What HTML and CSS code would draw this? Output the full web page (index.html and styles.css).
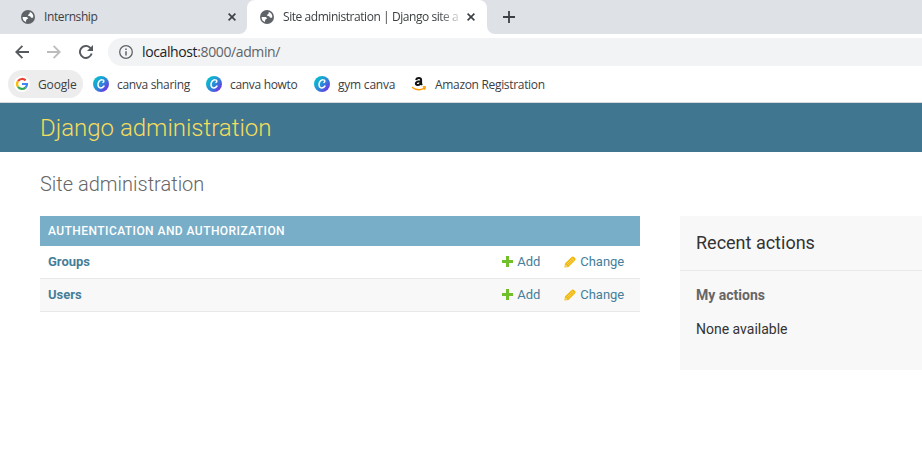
FILE: index.html
```html
<!DOCTYPE html>
<html lang="en">
<head>
<meta charset="utf-8">
<title>Site administration | Django site admin</title>
<link rel="stylesheet" href="styles.css">
</head>
<body>
<svg class="defs" width="0" height="0" aria-hidden="true">
  <defs>
    <linearGradient id="canvaFill" x1="0.1" y1="0.2" x2="0.9" y2="0.9">
      <stop offset="0" stop-color="#08bdd0"/><stop offset=".5" stop-color="#2a8ad8"/><stop offset="1" stop-color="#7628e8"/>
    </linearGradient>
    <symbol id="globe" viewBox="0 0 14 14">
      <circle cx="7" cy="7" r="7" fill="#5f6368"/>
      <path d="M1.6 6.9 4.5 7C6.1 7 7.1 7.5 7 8.7L5.9 9.1C5.4 9.7 5.5 10.2 5 10.5V12A5.4 5.4 0 0 1 1.6 6.9ZM8.9 2A5.4 5.4 0 0 1 12.3 7.3C11.4 8.1 10.3 8 9.8 7.2 9.4 6.2 8.6 6.2 7.6 6 6.9 5.4 7 4.6 8 4.3 8.9 3.9 8.4 2.8 8.9 2Z" fill="#fff"/>
    </symbol>
    <symbol id="canva" viewBox="0 0 16 16">
      <circle cx="8" cy="8" r="8" fill="url(#canvaFill)"/>
      <path d="M10 6.4C11.2 5.9 11.2 3.9 9.3 3.8 6.8 3.6 4.8 6.3 5 9 5.3 12.8 9.1 12.7 11 10" fill="none" stroke="#fff" stroke-width="1.5" stroke-linecap="round"/>
    </symbol>
    <symbol id="close" viewBox="0 0 8 8"><path d="M.6.6 7.4 7.4M7.4.6.6 7.4" stroke="#3c4043" stroke-width="1.6"/></symbol>
    <symbol id="add" viewBox="0 0 11 11"><path d="M4 0h3v4h4v3H7v4H4V7H0V4h4z" fill="#70bf2b"/></symbol>
    <symbol id="pencil" viewBox="0 0 12 12">
      <path d="M.4 11.6 1 7.6 7.6 1Q8.8-.1 9.9 1L11 2.1Q12.1 3.2 11 4.4L4.4 11Z" fill="#efb80b"/>
      <path d="M2.8 8.2 7.5 3.5M4 9.3 8.7 4.6" stroke="#f8dc82" stroke-width=".7"/>
      <path d="M1.6 8.7 3.3 10.4 1.5 10.6Z" fill="#fff8df"/><path d="M7.4 2 10 4.6" stroke="#fff0b4" stroke-width=".6"/>
    </symbol>
  </defs>
</svg>

<header class="browser">
  <div class="tabs">
    <div class="tab tab-idle">
      <svg class="globe"><use href="#globe"/></svg><span class="tab-title">Internship</span><svg class="close"><use href="#close"/></svg>
    </div>
    <div class="tab tab-active">
      <svg class="globe"><use href="#globe"/></svg><span class="tab-title title-long">Site administration | Django site a</span><svg class="close"><use href="#close"/></svg>
    </div>
    <svg class="new-tab" viewBox="0 0 12 12"><path d="M6 0V12M0 6H12" stroke="#3c4043" stroke-width="1.8"/></svg>
  </div>
  <div class="toolbar">
    <svg class="nav" viewBox="0 0 14 14"><path d="M14 7H1.5M7.4.9 1.3 7 7.4 13.1" fill="none" stroke="#55595e" stroke-width="1.8"/></svg>
    <svg class="nav" viewBox="0 0 14 14"><path d="M0 7H12.5M6.6.9 12.7 7 6.6 13.1" fill="none" stroke="#babcbe" stroke-width="1.8"/></svg>
    <svg class="nav" viewBox="0 0 14 14"><path d="M12.7 8.6A6 6 0 1 1 11.3 2.8L12 3.5" fill="none" stroke="#55595e" stroke-width="1.9"/><path d="M14 0V6H8Z" fill="#55595e"/></svg>
    <div class="address">
      <svg class="info" viewBox="0 0 14 14"><circle cx="7" cy="7" r="6.3" fill="none" stroke="#5f6368" stroke-width="1.3"/><path d="M7 6.2V10.5M7 3.5V5" stroke="#5f6368" stroke-width="1.5"/></svg>
      <span class="url"><span class="host">localhost</span>:8000/admin/</span>
    </div>
  </div>
  <nav class="bookmarks">
    <a class="bookmark bm-google"><svg class="bm-icon" viewBox="0 0 16 16"><circle cx="8" cy="8" r="8" fill="#fff"/><g fill="none" stroke-width="2.2"><path d="M4 5.1A5 5 0 0 1 11.6 4.4" stroke="#ea4335"/><path d="M4 10.9A5 5 0 0 1 4 5.1" stroke="#fbbc05"/><path d="M11.5 11.6A5 5 0 0 1 4 10.9" stroke="#34a853"/><path d="M8 8H13A5 5 0 0 1 11.5 11.6" stroke="#4285f4"/></g></svg><span>Google</span></a>
    <a class="bookmark bm-sharing"><svg class="bm-icon"><use href="#canva"/></svg><span>canva sharing</span></a>
    <a class="bookmark bm-howto"><svg class="bm-icon"><use href="#canva"/></svg><span>canva howto</span></a>
    <a class="bookmark bm-gym"><svg class="bm-icon"><use href="#canva"/></svg><span>gym canva</span></a>
    <a class="bookmark bm-amazon"><svg class="bm-icon" viewBox="0 0 16 16"><path d="M5.2 4.1C5.5 1.4 10.1 1.1 10.1 4V7.7L11 9M9.7 5.2C3.6 5 4.1 9.1 6.5 9.1 8.6 9.1 9.7 7.5 9.7 5.2" fill="none" stroke="#111" stroke-width="2"/><path d="M1 11.2Q7.2 15.8 13.4 12.1M11.8 11Q14.3 10.2 14.3 11.2T13.2 13.6" fill="none" stroke="#f90" stroke-width="1.4"/></svg><span>Amazon Registration</span></a>
  </nav>
</header>

<div class="brand"><h1>Django administration</h1></div>
<main>
  <h2 class="page-title">Site administration</h2>
  <div class="columns">
    <section class="module">
      <div class="caption">AUTHENTICATION AND AUTHORIZATION</div>
      <div class="row"><a class="model">Groups</a><a class="add"><svg><use href="#add"/></svg>Add</a><a class="change"><svg><use href="#pencil"/></svg>Change</a></div>
      <div class="row row-alt"><a class="model">Users</a><a class="add"><svg><use href="#add"/></svg>Add</a><a class="change"><svg><use href="#pencil"/></svg>Change</a></div>
    </section>
    <aside class="recent">
      <h2>Recent actions</h2>
      <h3>My actions</h3>
      <p>None available</p>
    </aside>
  </div>
</main>
</body>
</html>
```
FILE: styles.css
```css
* { box-sizing: border-box; }
body { margin: 0; overflow: hidden; background: #fff; color: #333; font-family: Roboto, "Liberation Sans", sans-serif; font-size: 14px; }
svg { display: block; flex: none; }
.defs { position: absolute; }
h1, h2, h3, p { margin: 0; }

.browser { height: 103px; border-bottom: 1px solid #d9dadd; font-family: "Open Sans", "Noto Sans", sans-serif; font-size: 12px; color: #3c4043; }
.tabs { display: flex; align-items: center; height: 34px; background: linear-gradient(#dee1e6 0 24px, transparent 24px), linear-gradient(90deg, #dee1e6 0 239px, #fff 239px 495px, #dee1e6 495px); }
.tab { display: flex; align-items: center; height: 34px; }
.tab-idle { width: 247px; padding: 0 11px 0 21px; border-bottom-right-radius: 8px; background: #dee1e6; }
.tab-active { width: 240px; padding: 0 12px 0 13px; border-radius: 8px 8px 0 0; background: #fff; }
.globe { width: 14px; height: 14px; }
.tab-title { flex: 1; margin-left: 9px; white-space: nowrap; line-height: 18px; letter-spacing: -.4px; }
.title-long { margin-right: 5px; letter-spacing: -.44px; -webkit-mask-image: linear-gradient(90deg, #000 156px, transparent 181px); mask-image: linear-gradient(90deg, #000 156px, transparent 181px); }
.close { width: 8px; height: 8px; }
.new-tab { align-self: stretch; width: 435px; height: 34px; padding: 11px 407px 11px 16px; border-bottom-left-radius: 8px; background: #dee1e6; }

.toolbar { display: flex; align-items: center; height: 36px; padding-left: 15px; gap: 18px; }
.nav { width: 14px; height: 14px; }
.address { display: flex; flex: 1; align-items: center; height: 28px; margin-left: -3px; padding-left: 11px; border-radius: 14px 0 0 14px; background: #f1f3f4; }
.info { width: 14px; height: 14px; }
.url { margin-left: 9px; font-size: 14px; line-height: 20px; letter-spacing: -.38px; color: #5f6368; }
.host { color: #202124; }
.bookmarks { display: flex; height: 28px; padding-left: 8px; }
.bookmark { display: flex; align-items: center; gap: 8px; white-space: nowrap; letter-spacing: -.32px; }
.bm-icon { width: 16px; height: 16px; }
.bm-google { width: 75px; margin-right: 10px; padding-left: 6px; border-radius: 14px; background: #ededee; letter-spacing: -.15px; }
.bm-sharing { width: 113px; }
.bm-howto { width: 108px; }
.bm-gym { width: 97px; letter-spacing: -.22px; }

.brand { display: flex; align-items: center; height: 49px; padding-left: 40px; background: #417690; }
.brand h1 { color: #f5dd5d; font-size: 24px; font-weight: 300; line-height: 28px; }
main { padding: 20px 0 0 40px; }
.page-title { margin-bottom: 20px; color: #666; font-size: 20px; font-weight: 300; line-height: 24px; }
.columns { display: grid; grid-template-columns: 600px 1fr; column-gap: 40px; align-items: start; }
.caption { height: 30px; padding-left: 8px; background: #79aec8; color: #fff; font-size: 12px; font-weight: 500; line-height: 30px; letter-spacing: .44px; }
.row { display: grid; grid-template-columns: 454px 62px 1fr; height: 33px; padding-left: 8px; border-bottom: 1px solid #e8e8e8; color: #447e9b; font-size: 13px; line-height: 32px; }
.row-alt { background: #f8f8f8; }
.model { font-weight: 700; }
.add, .change { display: flex; align-items: center; }
.add svg { width: 11px; height: 11px; margin: 0 4.2px 1px 0; }
.change svg { width: 12px; height: 12px; margin: 0 4.2px 0 0; }
.recent { height: 154px; background: #f8f8f8; }
.recent h2 { height: 55px; padding: 16px 16px 0; border-bottom: 1px solid #e8e8e8; font-size: 18px; font-weight: 400; line-height: 22px; }
.recent h3 { margin: 16px 16px 0; color: #666; font-size: 14px; font-weight: 700; line-height: 17px; }
.recent p { margin: 17px 16px 0; line-height: 17px; }
```
